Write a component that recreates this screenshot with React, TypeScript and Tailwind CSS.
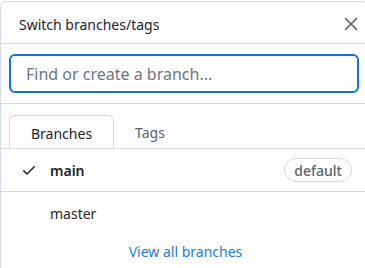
import React from 'react'

const font = { fontFamily: '"Noto Sans", "Liberation Sans", sans-serif' }

function XIcon() {
  return (
    <svg width="14" height="14" viewBox="0 0 14 14" fill="none" stroke="currentColor" strokeWidth="1.7" strokeLinecap="round">
      <path d="M1.5 1.5 12.5 12.5M12.5 1.5 1.5 12.5" />
    </svg>
  )
}

function CheckIcon() {
  return (
    <svg width="16" height="16" viewBox="0 0 16 16" fill="currentColor">
      <path d="M13.78 4.22a.75.75 0 0 1 0 1.06l-7.25 7.25a.75.75 0 0 1-1.06 0L2.22 9.28a.751.751 0 0 1 .018-1.042.751.751 0 0 1 1.042-.018L6 10.94l6.72-6.72a.75.75 0 0 1 1.06 0Z" />
    </svg>
  )
}

export default function App() {
  return (
    <div className="w-[365px] h-[268px] overflow-hidden bg-white" style={font}>
      <div className="w-[368px] mt-px border border-[#d1d9e0] rounded-md bg-white">
        {/* header */}
        <div className="h-[42px] flex items-center justify-between pt-[3px] pl-[18px] pr-[9px] border-b border-[#d1d9e0]">
          <span className="text-[14px] text-[#1f2328]">Switch branches/tags</span>
          <span className="text-[#59636e] flex"><XIcon /></span>
        </div>

        {/* filter */}
        <div className="px-2 pt-[10px] pb-[10px] border-b border-[#d1d9e0]">
          <input
            placeholder="Find or create a branch..."
            className="w-full h-[39px] rounded-md border-2 border-[#1570e0] px-[15px] text-[16px] text-[#1f2328] placeholder:text-[#6e7781] outline-none"
            style={font}
          />
        </div>

        {/* tabs */}
        <div className="flex pt-[11px] pl-2 border-b border-[#d1d9e0]">
          <div className="px-[21px] h-[33px] flex items-center pt-[2px] border border-b-0 border-[#d1d9e0] rounded-t-md bg-white -mb-px text-[14px] text-[#1f2328]">
            Branches
          </div>
          <div className="px-[21px] h-[33px] flex items-center pt-[2px] text-[14px] text-[#59636e]">Tags</div>
        </div>

        {/* list */}
        <div className="flex items-center h-[43px] pl-[20px] pr-[15px] border-b border-[#d1d9e0]">
          <span className="text-[#1f2328] flex w-[29px]"><CheckIcon /></span>
          <span className="text-[14px] font-semibold text-[#1f2328] flex-1">main</span>
          <span className="h-[24px] px-[9px] flex items-center rounded-full border border-[#d1d9e0] text-[14px] font-medium text-[#59636e]">
            default
          </span>
        </div>
        <div className="flex items-center h-[42px] pl-[49px] text-[14px] text-[#1f2328]">master</div>
        <div className="flex justify-center pt-[7px] pb-[12px] pl-[3px]">
          <span className="text-[14px] text-[#1f79e0]">View all branches</span>
        </div>
      </div>
    </div>
  )
}
